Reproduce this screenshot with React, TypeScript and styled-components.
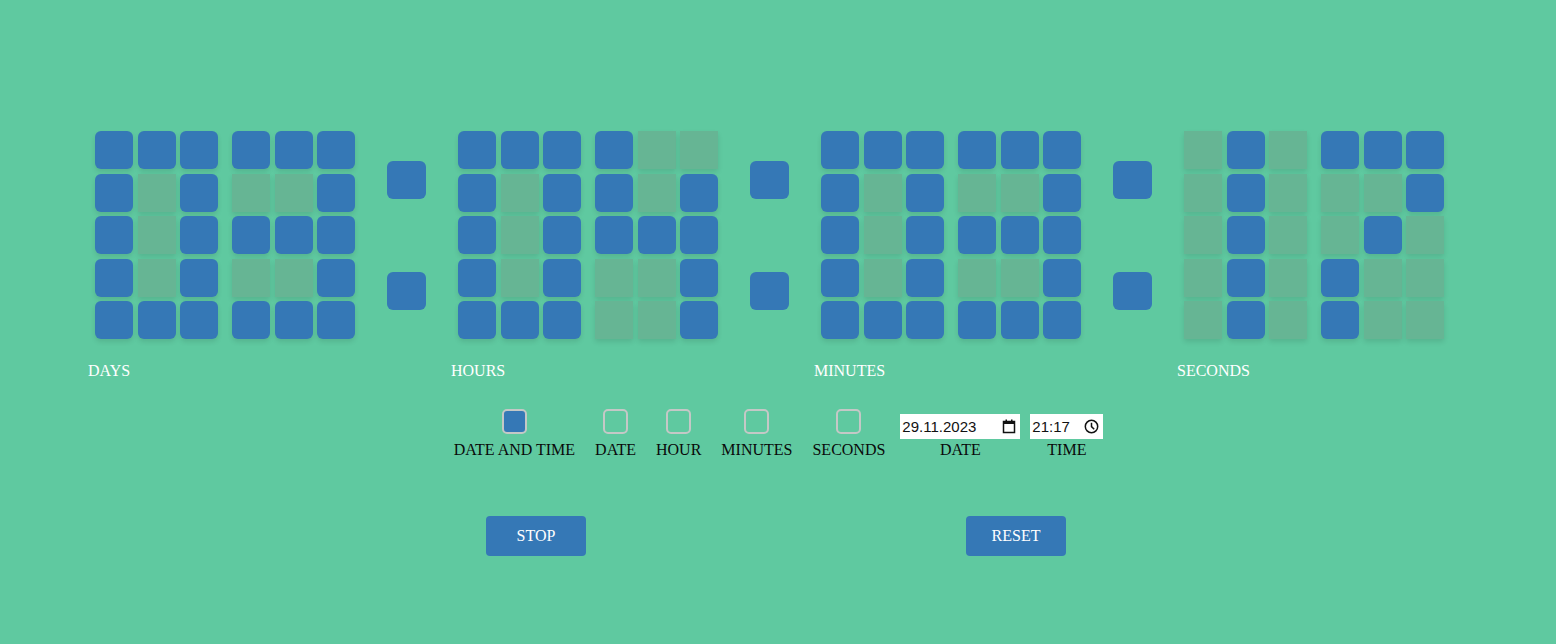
import { useState } from "react";
import styled, { createGlobalStyle } from "styled-components";


// digit patterns, 3 columns x 5 rows
const DIGITS: Record<string, string[]> = {
    "0": ["111", "101", "101", "101", "111"],
    "1": ["010", "010", "010", "010", "010"],
    "2": ["111", "001", "111", "100", "111"],
    "3": ["111", "001", "111", "001", "111"],
    "4": ["100", "101", "111", "001", "001"],
    "5": ["111", "100", "111", "001", "111"],
    "6": ["111", "100", "111", "101", "111"],
    "7": ["111", "001", "010", "100", "100"],
    "8": ["111", "101", "111", "101", "111"],
    "9": ["111", "101", "111", "001", "111"],
};

const GROUPS = [
    { label: "DAYS", value: "03" },
    { label: "HOURS", value: "04" },
    { label: "MINUTES", value: "03" },
    { label: "SECONDS", value: "17" },
];

const MODES = ["DATE AND TIME", "DATE", "HOUR", "MINUTES", "SECONDS"];


const GlobalStyle = createGlobalStyle`
    html, body {
        margin: 0;
        padding: 0;
        background: #5fc9a0;
    }
    body {
        font-family: "Liberation Serif", "Times New Roman", serif;
        font-size: 16px;
    }
`;


function Digit({ value }: { value: string }) {
    const rows = DIGITS[value] ?? DIGITS["0"];
    return (
        <DigitGrid>
            {rows.join("").split("").map((bit, i) => (
                <Cell key={i} $on={bit === "1"} />
            ))}
        </DigitGrid>
    );
}


function CalendarIcon() {
    return (
        <svg width="14" height="15" viewBox="0 0 14 15" fill="none">
            <rect x="1.5" y="2.5" width="11" height="11" stroke="#111" strokeWidth="1.5" />
            <rect x="1.5" y="2.5" width="11" height="2.5" fill="#111" />
            <rect x="3.5" y="0.5" width="1.5" height="2.5" fill="#111" />
            <rect x="9" y="0.5" width="1.5" height="2.5" fill="#111" />
        </svg>
    );
}


function ClockIcon() {
    return (
        <svg width="15" height="15" viewBox="0 0 15 15" fill="none">
            <circle cx="7.5" cy="7.5" r="6.2" stroke="#111" strokeWidth="1.5" />
            <path d="M7.5 3.8 V7.6 L10.2 10.2" stroke="#111" strokeWidth="1.5" />
        </svg>
    );
}


export default function App() {
    // state
    const [mode, setMode] = useState<number>(0);
    const [date, setDate] = useState<string>("29.11.2023");
    const [time, setTime] = useState<string>("21:17");
    const [running, setRunning] = useState<boolean>(true);


    // render
    return (
        <Page>
            <GlobalStyle />
            <ClockRow>
                {GROUPS.map((group, gi) => (
                    <GroupWrap key={group.label}>
                        <Group>
                            <Digits>
                                {group.value.split("").map((d, i) => (
                                    <Digit key={i} value={d} />
                                ))}
                            </Digits>
                            <GroupLabel>{group.label}</GroupLabel>
                        </Group>
                        {gi < GROUPS.length - 1 && (
                            <Colon>
                                <ColonDot />
                                <ColonDot />
                            </Colon>
                        )}
                    </GroupWrap>
                ))}
            </ClockRow>

            <Controls>
                {MODES.map((m, i) => (
                    <ModeItem key={m}>
                        <Check
                            type="checkbox"
                            checked={mode === i}
                            onChange={() => setMode(i)}
                        />
                        <ControlLabel>{m}</ControlLabel>
                    </ModeItem>
                ))}
                <FieldItem>
                    <FieldBox $width={120}>
                        <FieldInput value={date} onChange={e => setDate(e.target.value)} />
                        <CalendarIcon />
                    </FieldBox>
                    <ControlLabel>DATE</ControlLabel>
                </FieldItem>
                <FieldItem>
                    <FieldBox $width={73}>
                        <FieldInput value={time} onChange={e => setTime(e.target.value)} />
                        <ClockIcon />
                    </FieldBox>
                    <ControlLabel>TIME</ControlLabel>
                </FieldItem>
            </Controls>

            <Buttons>
                <ActionButton onClick={() => setRunning(!running)}>
                    {running ? "STOP" : "START"}
                </ActionButton>
                <ActionButton onClick={() => setRunning(false)}>RESET</ActionButton>
            </Buttons>
        </Page>
    );
}


const Page = styled.div`
    width: 100%;
    min-height: 644px;
    padding-top: 131px;
    box-sizing: border-box;
    background: #5fc9a0;
`;

const ClockRow = styled.div`
    display: flex;
    padding-left: 88px;
`;

const GroupWrap = styled.div`
    display: flex;
    align-items: flex-start;
`;

const Group = styled.div`
    display: flex;
    flex-direction: column;
`;

const Digits = styled.div`
    display: flex;
    gap: 14px;
    padding-left: 7px;
`;

const DigitGrid = styled.div`
    display: grid;
    grid-template-columns: repeat(3, 38px);
    grid-template-rows: repeat(5, 38px);
    gap: 4.5px;
`;

const Cell = styled.div<{ $on: boolean }>`
    background: ${p => (p.$on ? "#3578b6" : "#66b594")};
    border-radius: ${p => (p.$on ? "6px" : "0")};
    box-shadow: 0 3px 5px rgba(0, 0, 0, 0.1);
`;

const GroupLabel = styled.div`
    margin-top: 23px;
    color: #ffffff;
    font-size: 16px;
`;

const Colon = styled.div`
    height: 208px;
    width: 39px;
    margin: 0 25px 0 32px;
    display: flex;
    flex-direction: column;
    justify-content: center;
    gap: 73px;
`;

const ColonDot = styled.div`
    height: 38px;
    width: 39px;
    border-radius: 6px;
    background: #3578b6;
`;

const Controls = styled.div`
    margin-top: 29px;
    display: flex;
    justify-content: center;
    align-items: flex-end;
    padding-right: 4px;
`;

const ModeItem = styled.label`
    display: flex;
    flex-direction: column;
    align-items: center;
    gap: 7px;
    padding: 0 10px;
    cursor: pointer;
`;

const Check = styled.input`
    appearance: none;
    margin: 0;
    width: 25px;
    height: 25px;
    box-sizing: border-box;
    border: 2px solid #c4c8c6;
    border-radius: 5px;
    background: transparent;
    cursor: pointer;

    &:checked {
        background: #3578b6;
    }
`;

const ControlLabel = styled.span`
    color: #0a0a0a;
    font-size: 16px;
    line-height: 18px;
    white-space: nowrap;
`;

const FieldItem = styled.div`
    display: flex;
    flex-direction: column;
    align-items: center;
    gap: 2px;
    padding: 0 5px;
`;

const FieldBox = styled.div<{ $width: number }>`
    width: ${p => p.$width}px;
    height: 25px;
    box-sizing: border-box;
    padding: 0 4px 0 2px;
    background: #ffffff;
    display: flex;
    align-items: center;
    gap: 2px;
`;

const FieldInput = styled.input`
    flex: 1;
    min-width: 0;
    border: none;
    outline: none;
    padding: 0;
    background: transparent;
    font-family: "Liberation Sans", Arial, sans-serif;
    font-size: 15px;
    color: #111;
`;

const Buttons = styled.div`
    margin-top: 57px;
    display: flex;
    justify-content: center;
    gap: 380px;
    padding-right: 4px;
`;

const ActionButton = styled.button`
    width: 100px;
    height: 40px;
    border: none;
    border-radius: 4px;
    background: #3578b6;
    color: #ffffff;
    font-family: "Liberation Serif", "Times New Roman", serif;
    font-size: 16px;
    cursor: pointer;
`;
